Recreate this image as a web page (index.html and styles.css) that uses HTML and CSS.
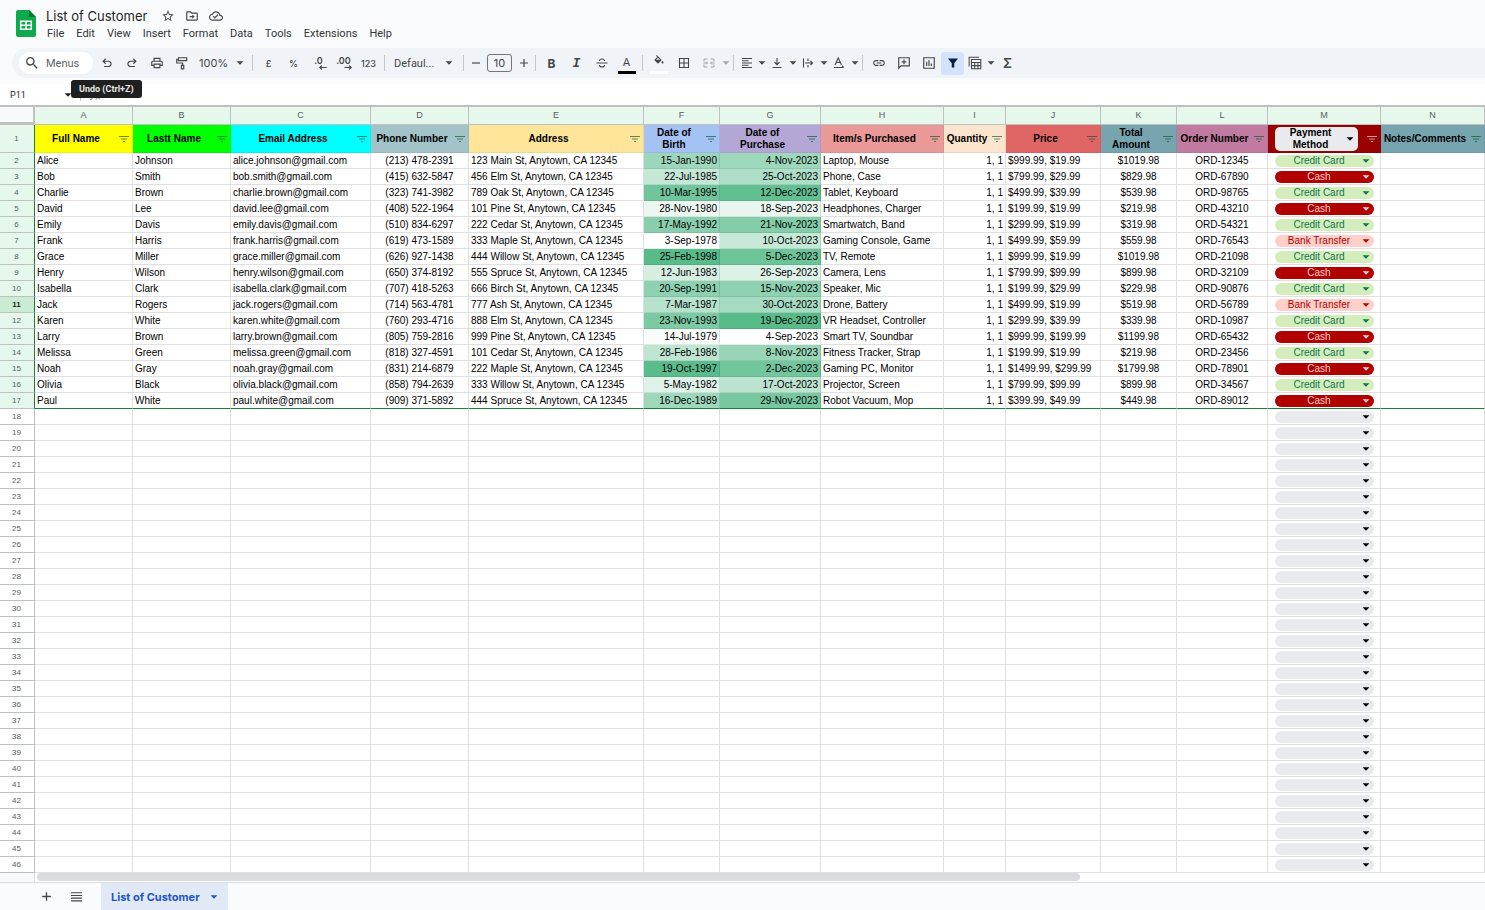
FILE: index.html
```html
<!DOCTYPE html>
<html lang="en">
<head>
<meta charset="utf-8">
<title>List of Customer</title>
<link rel="stylesheet" href="styles.css">
</head>
<body>
<svg class="sprite" aria-hidden="true">
  <symbol id="i-caret" viewBox="0 0 8 8"><path d="M0.6 2.2h6.8L4 5.8z"/></symbol>
  <symbol id="i-star" viewBox="0 0 24 24"><path d="M22 9.24l-7.19-.62L12 2 9.19 8.63 2 9.24l5.46 4.73L5.82 21 12 17.27 18.18 21l-1.63-7.03L22 9.24zM12 15.4l-3.76 2.27 1-4.28-3.32-2.88 4.38-.38L12 6.1l1.71 4.04 4.38.38-3.32 2.88 1 4.28L12 15.4z"/></symbol>
  <symbol id="i-move" viewBox="0 0 24 24"><path d="M20 6h-8l-2-2H4c-1.1 0-2 .9-2 2v12c0 1.1.9 2 2 2h16c1.1 0 2-.9 2-2V8c0-1.100-.9-2-2-2zm0 12H4V6h5.200l2 2H20v10z"/><path d="M8 12h4.500V9.500L16.500 13l-4 3.500V14H8z"/></symbol>
  <symbol id="i-cloud" viewBox="0 0 24 24"><path d="M19.350 10.040C18.670 6.590 15.640 4 12 4 9.110 4 6.600 5.640 5.350 8.040 2.340 8.360 0 10.910 0 14c0 3.310 2.690 6 6 6h13c2.760 0 5-2.240 5-5 0-2.640-2.050-4.780-4.650-4.960zM19 18H6c-2.210 0-4-1.790-4-4 0-2.050 1.530-3.760 3.560-3.970l1.070-.110.5-.950C8.080 7.140 9.940 6 12 6c2.620 0 4.880 1.860 5.390 4.430l.3 1.500 1.530.110c1.560.100 2.780 1.410 2.780 2.960 0 1.650-1.350 3-3 3z"/><path d="M10 16.500l-3.500-3.500 1.400-1.400 2.100 2.100 4.500-4.500 1.400 1.400z"/></symbol>
  <symbol id="i-search" viewBox="0 0 24 24"><path d="M15.500 14h-.79l-.28-.27A6.471 6.471 0 0 0 16 9.500 6.500 6.500 0 1 0 9.500 16c1.610 0 3.090-.590 4.230-1.570l.27.28v.79l5 4.990L20.490 19l-4.990-5zm-6 0C7.010 14 5 11.990 5 9.500S7.010 5 9.500 5 14 7.010 14 9.500 11.990 14 9.500 14z"/></symbol>
  <symbol id="i-undo" viewBox="0 0 24 24"><path d="M7 19v-2h7.100q1.575 0 2.737-1T18 13.500 16.838 11 14.100 10H7.800l2.600 2.600L9 14 4 9l5-5 1.400 1.400L7.800 8h6.300q2.425 0 4.163 1.575T20 13.500t-1.737 3.925T14.100 19z"/></symbol>
  <symbol id="i-print" viewBox="0 0 24 24"><path d="M19 8h-1V3H6v5H5c-1.660 0-3 1.340-3 3v6h4v4h12v-4h4v-6c0-1.660-1.340-3-3-3zM8 5h8v3H8V5zm8 14H8v-4h8v4zm2-4v-2H6v2H4v-4c0-.55.45-1 1-1h14c.55 0 1 .45 1 1v4h-2z"/></symbol>
  <symbol id="i-paint" viewBox="0 0 24 24"><path d="M6 3h14v5H6zM6 5.500H3V12h10v4M11 16h4v6h-4z" fill="none" stroke="currentColor" stroke-width="2"/></symbol>
  <symbol id="i-strike" viewBox="0 0 24 24"><path d="M1 12h22M17 8c0-2.500-2-4-5-4S7 5.500 7 8M7 16c0 2.500 2 4 5 4s5-1.500 5-4" fill="none" stroke="currentColor" stroke-width="2.200"/></symbol>
  <symbol id="i-fill" viewBox="0 0 24 24"><path d="M16.560 8.940L7.620 0 6.210 1.410l2.380 2.380-5.150 5.150c-.59.59-.59 1.540 0 2.120l5.500 5.500c.29.29.68.44 1.060.44s.77-.15 1.060-.44l5.500-5.500c.59-.58.59-1.530 0-2.120zM6 9.300l4-4 4 4zM19 11.500s-2 2.170-2 3.500c0 1.100.9 2 2 2s2-.9 2-2c0-1.330-2-3.500-2-3.500z" fill-rule="evenodd"/></symbol>
  <symbol id="i-grid" viewBox="0 0 24 24"><path d="M3 3h18v18H3zM12 3v18M3 12h18" fill="none" stroke="currentColor" stroke-width="2.200"/></symbol>
  <symbol id="i-merge" viewBox="0 0 24 24"><path d="M9 4H2v5M15 4h7v5M9 20H2v-5M15 20h7v-5M1 12h8M6 9l3 3-3 3M23 12h-8M18 9l-3 3 3 3" fill="none" stroke="currentColor" stroke-width="2"/></symbol>
  <symbol id="i-align" viewBox="0 0 24 24"><path d="M2 3h20M2 7.500h13M2 12h20M2 16.500h13M2 21h20" fill="none" stroke="currentColor" stroke-width="2"/></symbol>
  <symbol id="i-valign" viewBox="0 0 24 24"><path d="M12 2v13M7 10.500l5 5 5-5M3 21h18" fill="none" stroke="currentColor" stroke-width="2.200"/></symbol>
  <symbol id="i-wrap" viewBox="0 0 24 24"><path d="M3 3v18M12 3v5M12 16v5M6 12h15M17 8l4 4-4 4" fill="none" stroke="currentColor" stroke-width="2.200"/></symbol>
  <symbol id="i-rotate" viewBox="0 0 24 24"><path d="M4 16L10.500 2 17 16M6.500 11h8M2 21h19M18 17.500l3.500 3.500" fill="none" stroke="currentColor" stroke-width="2.200"/></symbol>
  <symbol id="i-link" viewBox="0 0 24 24"><path d="M3.900 12c0-1.710 1.390-3.100 3.100-3.100h4V7H7c-2.760 0-5 2.240-5 5s2.240 5 5 5h4v-1.900H7c-1.710 0-3.100-1.390-3.100-3.100zM8 13h8v-2H8v2zm9-6h-4v1.900h4c1.710 0 3.100 1.390 3.100 3.100s-1.390 3.100-3.100 3.100h-4V17h4c2.760 0 5-2.240 5-5s-2.240-5-5-5z"/></symbol>
  <symbol id="i-comment" viewBox="0 0 24 24"><path d="M3 21V3h18v14H7zM12 6v8M8 10h8" fill="none" stroke="currentColor" stroke-width="2"/></symbol>
  <symbol id="i-chart" viewBox="0 0 24 24"><path d="M3 3h18v18H3zM8 10v7M12 7v10M16 13v4" fill="none" stroke="currentColor" stroke-width="2"/></symbol>
  <symbol id="i-funnel" viewBox="0 0 24 24"><path d="M2 3h20l-7.500 9.500V21h-5v-8.500z"/></symbol>
  <symbol id="i-views" viewBox="0 0 24 24"><path d="M2 18V2h17M6 6h16v16H6zM6 11h16M6 16.500h16M11.500 11v11M17 11v11" fill="none" stroke="currentColor" stroke-width="1.800"/></symbol>
  <symbol id="i-left" viewBox="0 0 10 6"><path d="M9.500 3H1M3.500 0.500L1 3l2.500 2.500" fill="none" stroke="currentColor" stroke-width="1.400"/></symbol>
  <symbol id="i-filter" viewBox="0 0 10 8"><path d="M0 1.500h10M2 4h6M4 6.500h2" fill="none" stroke="currentColor"/></symbol>
</svg>

<header class="top">
  <div class="brand">
    <svg class="logo" viewBox="0 0 20 27"><path d="M2 0h11l7 7v18a2 2 0 0 1-2 2H2a2 2 0 0 1-2-2V2a2 2 0 0 1 2-2z" fill="#0caa4b"/><path d="M13 0l7 7h-7z" fill="#067a34"/><path d="M4.700 11.200h10.600v8H4.700zM10 11.200v8M4.700 15.200h10.600" fill="none" stroke="#fff" stroke-width="1.500"/></svg>
    <div>
      <div class="title-row">
        <h1 class="title">List of Customer</h1>
        <button class="mini" aria-label="Star"><svg><use href="#i-star"/></svg></button>
        <button class="mini" aria-label="Move"><svg><use href="#i-move"/></svg></button>
        <button class="mini" aria-label="Document status"><svg><use href="#i-cloud"/></svg></button>
      </div>
      <nav class="menus">
        <button>File</button><button>Edit</button><button>View</button><button>Insert</button><button>Format</button><button>Data</button><button>Tools</button><button>Extensions</button><button>Help</button>
      </nav>
    </div>
  </div>
  <div class="toolbar" role="toolbar">
    <label class="search"><svg><use href="#i-search"/></svg><input type="text" placeholder="Menus" aria-label="Search the menus"></label>
    <div class="undo-wrap">
      <button class="tool" aria-label="Undo"><svg class="big"><use href="#i-undo"/></svg></button>
      <span class="tooltip" role="tooltip">Undo (Ctrl+Z)</span>
    </div>
    <button class="tool" aria-label="Redo"><svg class="big flip"><use href="#i-undo"/></svg></button>
    <button class="tool" aria-label="Print"><svg class="big"><use href="#i-print"/></svg></button>
    <button class="tool" aria-label="Paint format"><svg class="big"><use href="#i-paint"/></svg></button>
    <span class="pick zoom"><select aria-label="Zoom"><option>100%</option></select><svg><use href="#i-caret"/></svg></span>
    <i class="sep"></i>
    <button class="tool num">£</button>
    <button class="tool num">%</button>
    <button class="tool dec" aria-label="Decrease decimal places"><span>.0</span><svg><use href="#i-left"/></svg></button>
    <button class="tool dec" aria-label="Increase decimal places"><span>.00</span><svg class="flip"><use href="#i-left"/></svg></button>
    <button class="tool num">123</button>
    <i class="sep"></i>
    <span class="pick family"><select aria-label="Font"><option>Defaul...</option></select><svg><use href="#i-caret"/></svg></span>
    <i class="sep"></i>
    <button class="tool step" aria-label="Decrease font size"><svg viewBox="0 0 12 12"><path d="M2 6h8" stroke="currentColor" stroke-width="1.200"/></svg></button>
    <input class="size" type="text" value="10" aria-label="Font size">
    <button class="tool step" aria-label="Increase font size"><svg viewBox="0 0 12 12"><path d="M6 2v8M2 6h8" stroke="currentColor" stroke-width="1.200"/></svg></button>
    <i class="sep"></i>
    <button class="tool bold">B</button>
    <button class="tool ital">I</button>
    <button class="tool" aria-label="Strikethrough"><svg><use href="#i-strike"/></svg></button>
    <button class="tool color">A</button>
    <i class="sep"></i>
    <button class="tool fill" aria-label="Fill colour"><svg><use href="#i-fill"/></svg></button>
    <button class="tool" aria-label="Borders"><svg><use href="#i-grid"/></svg></button>
    <button class="tool off" aria-label="Merge cells"><svg><use href="#i-merge"/></svg></button>
    <button class="drop off" aria-label="Merge type"><svg><use href="#i-caret"/></svg></button>
    <i class="sep"></i>
    <button class="tool slim" aria-label="Horizontal align"><svg><use href="#i-align"/></svg></button>
    <button class="drop" aria-label="Align options"><svg><use href="#i-caret"/></svg></button>
    <button class="tool mid" aria-label="Vertical align"><svg><use href="#i-valign"/></svg></button>
    <button class="drop" aria-label="Vertical options"><svg><use href="#i-caret"/></svg></button>
    <button class="tool mid" aria-label="Text wrapping"><svg><use href="#i-wrap"/></svg></button>
    <button class="drop" aria-label="Wrap options"><svg><use href="#i-caret"/></svg></button>
    <button class="tool mid" aria-label="Text rotation"><svg><use href="#i-rotate"/></svg></button>
    <button class="drop" aria-label="Rotation options"><svg><use href="#i-caret"/></svg></button>
    <i class="sep"></i>
    <button class="tool" aria-label="Insert link"><svg class="big"><use href="#i-link"/></svg></button>
    <button class="tool" aria-label="Insert comment"><svg class="big"><use href="#i-comment"/></svg></button>
    <button class="tool" aria-label="Insert chart"><svg class="big"><use href="#i-chart"/></svg></button>
    <button class="tool active" aria-label="Remove filter"><svg><use href="#i-funnel"/></svg></button>
    <button class="tool mid" aria-label="Filter views"><svg class="big"><use href="#i-views"/></svg></button>
    <button class="drop" aria-label="View options"><svg><use href="#i-caret"/></svg></button>
    <button class="tool sigma" aria-label="Functions">Σ</button>
  </div>
</header>

<div class="formula">
  <label class="namebox"><input type="text" value="P11" aria-label="Name box"><svg><use href="#i-caret"/></svg></label>
  <span class="fx"><svg viewBox="0 0 12 12"><path d="M1 10.500q2 1 2.500-2L4.500 3Q5 1 7 1.500M2.500 5h4M7 6l4 4.500M11 6l-4 4.500" fill="none" stroke="currentColor"/></svg></span>
  <input class="entry" type="text" aria-label="Formula">
</div>

<main>
  <table class="sheet">
    <colgroup><col class="c-n"><col class="c-a"><col class="c-a"><col class="c-c"><col class="c-a"><col class="c-e"><col class="c-f"><col class="c-g"><col class="c-h"><col class="c-i"><col class="c-j"><col class="c-f"><col class="c-l"><col class="c-m"><col></colgroup>
    <thead id="letters"></thead>
    <tbody id="cells"></tbody>
  </table>
  <div class="scroll"><div class="gutter"></div><div class="track"><div class="thumb"></div></div></div>
</main>

<footer class="tabs">
  <button class="icon" aria-label="Add sheet"><svg viewBox="0 0 12 12"><path d="M6 2v8M2 6h8" stroke="currentColor" stroke-width="1.200"/></svg></button>
  <button class="icon" aria-label="All sheets"><svg viewBox="0 0 12 12"><path d="M1 2.500h10M1 5h10M1 7.500h10M1 10h10" stroke="currentColor"/></svg></button>
  <button class="tab">List of Customer<svg><use href="#i-caret"/></svg></button>
</footer>
<script src="sheet.js"></script>
</body>
</html>
```
FILE: styles.css
```css
* { box-sizing: border-box; }
body {
  margin: 0;
  min-height: 100vh;
  display: flex;
  flex-direction: column;
  font-family: Inter, sans-serif;
  font-size: 11px;
  color: #444746;
  background: #fff;
}
button, input, select {
  font: inherit;
  color: inherit;
  border: 0;
  padding: 0;
  margin: 0;
  background: none;
  outline: 0;
}
svg { display: block; fill: currentColor; }
.sprite { width: 0; height: 0; position: absolute; }

.top { background: #f9fbfd; padding: 8px 0 6px 12px; }
.brand { display: flex; gap: 10px; padding-left: 4px; height: 40px; }
.logo { width: 20px; height: 27px; margin-top: 2px; }
.title-row { display: flex; align-items: center; height: 16px; }
.title { margin: 0 9px 0 0; font-size: 13px; line-height: 16px; font-weight: 400; color: #1f1f1f; }
.mini { width: 24px; display: flex; justify-content: center; color: #444746; }
.mini svg { width: 14px; height: 14px; }
.menus { display: flex; gap: 12px; padding-left: 1px; margin-top: 2px; font-family: Roboto, sans-serif; color: #333638; }
.menus button { line-height: 16px; }

.toolbar {
  display: flex;
  align-items: center;
  height: 30px;
  padding-left: 7px;
  border-radius: 15px 0 0 15px;
  background: #f0f4f9;
}
.search {
  display: flex;
  align-items: center;
  gap: 6px;
  width: 74px;
  height: 22px;
  margin-right: 1px;
  padding-left: 5px;
  border-radius: 11px;
  background: #fff;
}
.search svg { width: 16px; height: 16px; flex: none; }
.search input { width: 40px; font-family: Roboto, sans-serif; }
.search input::placeholder { color: #5f6368; opacity: 1; }
.undo-wrap { position: relative; }
.tooltip {
  position: absolute;
  left: -23px;
  top: 28px;
  padding: 0 8px;
  border-radius: 3px;
  font-family: Roboto, sans-serif;
  font-size: 9px;
  line-height: 18px;
  font-weight: 700;
  white-space: nowrap;
  color: #e8e8e8;
  background: #1f1f1f;
}
.tool {
  width: 25px;
  height: 23px;
  flex: none;
  display: flex;
  align-items: center;
  justify-content: center;
}
.tool svg { width: 12px; height: 12px; }
.tool svg.big { width: 14px; height: 14px; }
.flip { transform: scaleX(-1); }
.num { font-size: 9px; font-weight: 500; }
.dec { flex-direction: column; font-size: 9px; line-height: 9px; font-weight: 600; }
.tool.dec svg { width: 8px; height: 5px; margin-left: 8px; }
.pick { position: relative; flex: none; }
.pick select { appearance: none; width: 100%; height: 22px; }
.pick svg { position: absolute; right: 5px; top: 7px; width: 8px; height: 8px; pointer-events: none; }
.zoom { width: 55px; padding-left: 5px; }
.family { width: 72px; padding-left: 6px; font-family: Roboto, sans-serif; }
.family svg { right: 7px; }
.sep { width: 1px; height: 16px; flex: none; margin: 0 3px; background: #c7c7c7; }
.step { width: 17px; }
.size {
  width: 25px;
  height: 18px;
  margin: 0 3px;
  border: 1px solid #747775;
  border-radius: 3px;
  text-align: center;
  font-size: 11px;
}
.bold { font-size: 12px; font-weight: 700; }
.ital { font-family: "Liberation Mono", monospace; font-size: 13px; font-style: italic; font-weight: 700; }
.color, .fill { position: relative; }
.color::after, .fill::after {
  content: "";
  position: absolute;
  left: 4px;
  right: 3px;
  bottom: 1px;
  height: 3px;
  background: #000;
}
.fill::after { background: #fff; }
.color { padding-bottom: 3px; }
.fill { padding-bottom: 5px; }
.off { opacity: 0.45; }
.slim { width: 20px; }
.mid { width: 22px; }
.drop { width: 9px; flex: none; display: flex; justify-content: center; }
.drop svg { width: 8px; height: 8px; }
.active { width: 23px; border-radius: 3px; color: #041e49; background: #d3e3fd; }
.sigma { font-size: 13px; font-weight: 600; }

.formula { display: flex; height: 21px; background: #fff; }
.namebox { display: flex; align-items: center; width: 80px; padding-left: 10px; color: #1f1f1f; }
.namebox input { width: 54px; font-family: Roboto, sans-serif; font-size: 9px; }
.namebox svg { width: 8px; height: 8px; flex: none; }
.fx { padding: 5px 8px 0; border-left: 1px solid #c7c7c7; margin-bottom: 4px; color: #80868b; }
.fx svg { width: 12px; height: 12px; }
.entry { flex: 1; }

main { font-family: "Liberation Sans", Arial, sans-serif; }
.sheet {
  width: 100%;
  table-layout: fixed;
  border-collapse: separate;
  border-spacing: 0;
  border-top: 2px solid #c0c0c0;
  font-size: 10px;
  line-height: 15px;
  color: #000;
}
.c-n { width: 35px; } .c-a { width: 98px; } .c-c { width: 140px; } .c-e { width: 175px; }
.c-f { width: 76px; } .c-g { width: 101px; } .c-h { width: 123px; } .c-i { width: 62px; }
.c-j { width: 95px; } .c-l { width: 91px; } .c-m { width: 113px; }
.sheet th, .sheet td {
  height: 16px;
  padding: 0 2px;
  border: 0 solid #e0e0e0;
  border-width: 0 1px 1px 0;
  white-space: nowrap;
  overflow: hidden;
  text-align: left;
  font-weight: 400;
}
.sheet thead th { height: 18px; padding: 0 0 1px; line-height: 15px; text-align: center; font-size: 9px; color: #575b5f; background: #e6f8ec; border-color: #c0c0c0; }
.sheet thead .corner { background: #f8f9fa; border-width: 0 2px 3px 0; }
.sheet .rownum { padding: 0 1px 0 0; text-align: center; font-size: 8px; color: #575b5f; border-color: #c0c0c0; }
.sheet .in-range { background: #e6f8ec; border-right-color: #188038; }
.sheet .current { font-weight: 700; color: #1f1f1f; background: #c9ecd3; }
.sheet .range-end td { border-bottom-color: #188038; }
.sheet .mid-cell { text-align: center; }
.sheet .end-cell { text-align: right; }
.sheet .scale { border-right-color: rgba(0, 0, 0, 0.1); border-bottom-color: rgba(0, 0, 0, 0.08); }

.sheet .headings td { height: 28px; padding: 0; border-color: rgba(0, 0, 0, 0.06); }
.head { display: flex; align-items: center; padding-right: 3px; height: 27px; }
.head span { flex: 1; font-weight: 700; line-height: 12px; text-align: center; white-space: normal; }
.filter { width: 12px; flex: none; display: flex; justify-content: flex-end; color: rgba(10, 80, 45, 0.65); }
.filter svg { width: 10px; height: 8px; }
.k-yellow { background: #ff0; } .k-green { background: #0f0; } .k-cyan { background: #0ff; }
.k-slate { background: #a2c4c9; } .k-sand { background: #ffe599; } .k-blue { background: #a4c2f4; }
.k-violet { background: #b4a7d6; } .k-pink { background: #ea9999; } .k-peach { background: #fce5cd; }
.k-red { background: #e06666; } .k-teal { background: #76a5af; } .k-plum { background: #c27ba0; }
.k-maroon { background: #990000; }
.k-maroon .filter { color: #d99a9a; }
.head-chip {
  flex: 1;
  display: flex;
  align-items: center;
  height: 24px;
  margin: 0 9px 0 7px;
  padding-right: 4px;
  border-radius: 5px;
  font-weight: 700;
  background: #e8eaed;
}
.head-chip svg { width: 8px; height: 8px; }
.k-maroon .head .filter { width: 10px; }

.sheet .chip-cell { padding: 0 6px 0 7px; }
.chip { position: relative; display: block; height: 12px; border-radius: 6px; background: #e8eaed; }
.chip select { appearance: none; display: block; width: 100%; height: 12px; line-height: 12px; padding-right: 11px; text-align: center; text-align-last: center; }
.chip svg { position: absolute; right: 4px; top: 2px; width: 8px; height: 8px; pointer-events: none; }
.credit { color: #11734b; background: #d4edbc; }
.cash { color: #ffcfc9; background: #b10202; }
.bank { color: #b10202; background: #ffcfc9; }

.scroll { display: flex; height: 10px; border-bottom: 1px solid #dadce0; }
.gutter { width: 35px; background: #f8f9fa; border-right: 1px solid #dadce0; }
.track { flex: 1; padding-left: 2px; }
.thumb { width: 72%; height: 8px; border-radius: 4px; background: #dadce0; }

.tabs { flex: 1; display: flex; align-items: stretch; min-height: 27px; padding-left: 31px; background: #f9fbfd; }
.icon { width: 30px; display: flex; align-items: center; justify-content: center; }
.icon svg { width: 13px; height: 13px; }
.tab { display: flex; align-items: center; gap: 10px; margin-left: 10px; padding: 0 10px; font-weight: 700; color: #1a56c4; background: #e1e9f7; }
.tab svg { width: 8px; height: 8px; }
```
FILE: sheet.js
```js
const headings = [
  ["Full Name", "yellow"], ["Lastt Name", "green"], ["Email Address", "cyan"],
  ["Phone Number", "slate"], ["Address", "sand"], ["Date of<br>Birth", "blue"],
  ["Date of<br>Purchase", "violet"], ["Item/s Purchased", "pink"], ["Quantity", "peach"],
  ["Price", "red"], ["Total<br>Amount", "teal"], ["Order Number", "plum"],
  ["Payment<br>Method", "maroon"], ["Notes/Comments", "teal"]
];

const customers = `Alice|Johnson|alice.johnson@gmail.com|(213) 478-2391|123 Main St, Anytown, CA 12345|15-Jan-1990|4-Nov-2023|Laptop, Mouse|1, 1|$999.99, $19.99|$1019.98|ORD-12345|Credit Card
Bob|Smith|bob.smith@gmail.com|(415) 632-5847|456 Elm St, Anytown, CA 12345|22-Jul-1985|25-Oct-2023|Phone, Case|1, 1|$799.99, $29.99|$829.98|ORD-67890|Cash
Charlie|Brown|charlie.brown@gmail.com|(323) 741-3982|789 Oak St, Anytown, CA 12345|10-Mar-1995|12-Dec-2023|Tablet, Keyboard|1, 1|$499.99, $39.99|$539.98|ORD-98765|Credit Card
David|Lee|david.lee@gmail.com|(408) 522-1964|101 Pine St, Anytown, CA 12345|28-Nov-1980|18-Sep-2023|Headphones, Charger|1, 1|$199.99, $19.99|$219.98|ORD-43210|Cash
Emily|Davis|emily.davis@gmail.com|(510) 834-6297|222 Cedar St, Anytown, CA 12345|17-May-1992|21-Nov-2023|Smartwatch, Band|1, 1|$299.99, $19.99|$319.98|ORD-54321|Credit Card
Frank|Harris|frank.harris@gmail.com|(619) 473-1589|333 Maple St, Anytown, CA 12345|3-Sep-1978|10-Oct-2023|Gaming Console, Game|1, 1|$499.99, $59.99|$559.98|ORD-76543|Bank Transfer
Grace|Miller|grace.miller@gmail.com|(626) 927-1438|444 Willow St, Anytown, CA 12345|25-Feb-1998|5-Dec-2023|TV, Remote|1, 1|$999.99, $19.99|$1019.98|ORD-21098|Credit Card
Henry|Wilson|henry.wilson@gmail.com|(650) 374-8192|555 Spruce St, Anytown, CA 12345|12-Jun-1983|26-Sep-2023|Camera, Lens|1, 1|$799.99, $99.99|$899.98|ORD-32109|Cash
Isabella|Clark|isabella.clark@gmail.com|(707) 418-5263|666 Birch St, Anytown, CA 12345|20-Sep-1991|15-Nov-2023|Speaker, Mic|1, 1|$199.99, $29.99|$229.98|ORD-90876|Credit Card
Jack|Rogers|jack.rogers@gmail.com|(714) 563-4781|777 Ash St, Anytown, CA 12345|7-Mar-1987|30-Oct-2023|Drone, Battery|1, 1|$499.99, $19.99|$519.98|ORD-56789|Bank Transfer
Karen|White|karen.white@gmail.com|(760) 293-4716|888 Elm St, Anytown, CA 12345|23-Nov-1993|19-Dec-2023|VR Headset, Controller|1, 1|$299.99, $39.99|$339.98|ORD-10987|Credit Card
Larry|Brown|larry.brown@gmail.com|(805) 759-2816|999 Pine St, Anytown, CA 12345|14-Jul-1979|4-Sep-2023|Smart TV, Soundbar|1, 1|$999.99, $199.99|$1199.98|ORD-65432|Cash
Melissa|Green|melissa.green@gmail.com|(818) 327-4591|101 Cedar St, Anytown, CA 12345|28-Feb-1986|8-Nov-2023|Fitness Tracker, Strap|1, 1|$199.99, $19.99|$219.98|ORD-23456|Credit Card
Noah|Gray|noah.gray@gmail.com|(831) 214-6879|222 Maple St, Anytown, CA 12345|19-Oct-1997|2-Dec-2023|Gaming PC, Monitor|1, 1|$1499.99, $299.99|$1799.98|ORD-78901|Cash
Olivia|Black|olivia.black@gmail.com|(858) 794-2639|333 Willow St, Anytown, CA 12345|5-May-1982|17-Oct-2023|Projector, Screen|1, 1|$799.99, $99.99|$899.98|ORD-34567|Credit Card
Paul|White|paul.white@gmail.com|(909) 371-5892|444 Spruce St, Anytown, CA 12345|16-Dec-1989|29-Nov-2023|Robot Vacuum, Mop|1, 1|$399.99, $49.99|$449.98|ORD-89012|Cash`
  .split("\n").map(line => line.split("|"));

const LAST_ROW = 46, CURRENT = 11, PAYMENT = 12;
const caret = '<svg><use href="#i-caret"/></svg>';
const chipClass = { "Credit Card": "credit", "Cash": "cash", "Bank Transfer": "bank" };
const align = { 3: "mid-cell", 5: "end-cell", 6: "end-cell", 8: "end-cell", 10: "mid-cell", 11: "mid-cell" };

// Two-stop colour scale, white at the earliest date and green at the latest.
const times = col => customers.map(c => Date.parse(c[col].replace(/-/g, " ")));
const scales = { 5: times(5), 6: times(6) };
function scaleColor(col, i) {
  const all = scales[col], lo = Math.min(...all), hi = Math.max(...all);
  const t = (all[i] - lo) / (hi - lo);
  const mix = end => Math.round(255 + (end - 255) * t);
  return `rgb(${mix(87)}, ${mix(187)}, ${mix(138)})`;
}

function chip(value, row) {
  return `<td class="chip-cell"><span class="chip ${chipClass[value] || ""}"><select aria-label="Payment method, row ${row}"><option>${value}</option></select>${caret}</span></td>`;
}

document.getElementById("letters").innerHTML =
  '<tr><th class="corner"></th>' + headings.map((h, i) => `<th>${String.fromCharCode(65 + i)}</th>`).join("") + "</tr>";

let html = '<tr class="headings"><th class="rownum in-range">1</th>' + headings.map(([text, key], i) => {
  const label = i === PAYMENT
    ? `<button class="head-chip"><span>${text}</span>${caret}</button>`
    : `<span>${text}</span>`;
  return `<td class="k-${key}"><div class="head">${label}<button class="filter" aria-label="Filter column"><svg><use href="#i-filter"/></svg></button></div></td>`;
}).join("") + "</tr>";

for (let row = 2; row <= LAST_ROW; row++) {
  const data = customers[row - 2];
  const num = "rownum" + (data ? " in-range" : "") + (row === CURRENT ? " current" : "");
  html += `<tr${row === customers.length + 1 ? ' class="range-end"' : ""}><th class="${num}">${row}</th>`;
  headings.forEach((h, i) => {
    const value = data && data[i] || "";
    if (i === PAYMENT) html += chip(value, row);
    else if (data && scales[i]) html += `<td class="end-cell scale" style="background:${scaleColor(i, row - 2)}">${value}</td>`;
    else html += `<td class="${align[i] || ""}">${value}</td>`;
  });
  html += "</tr>";
}
document.getElementById("cells").innerHTML = html;
```
